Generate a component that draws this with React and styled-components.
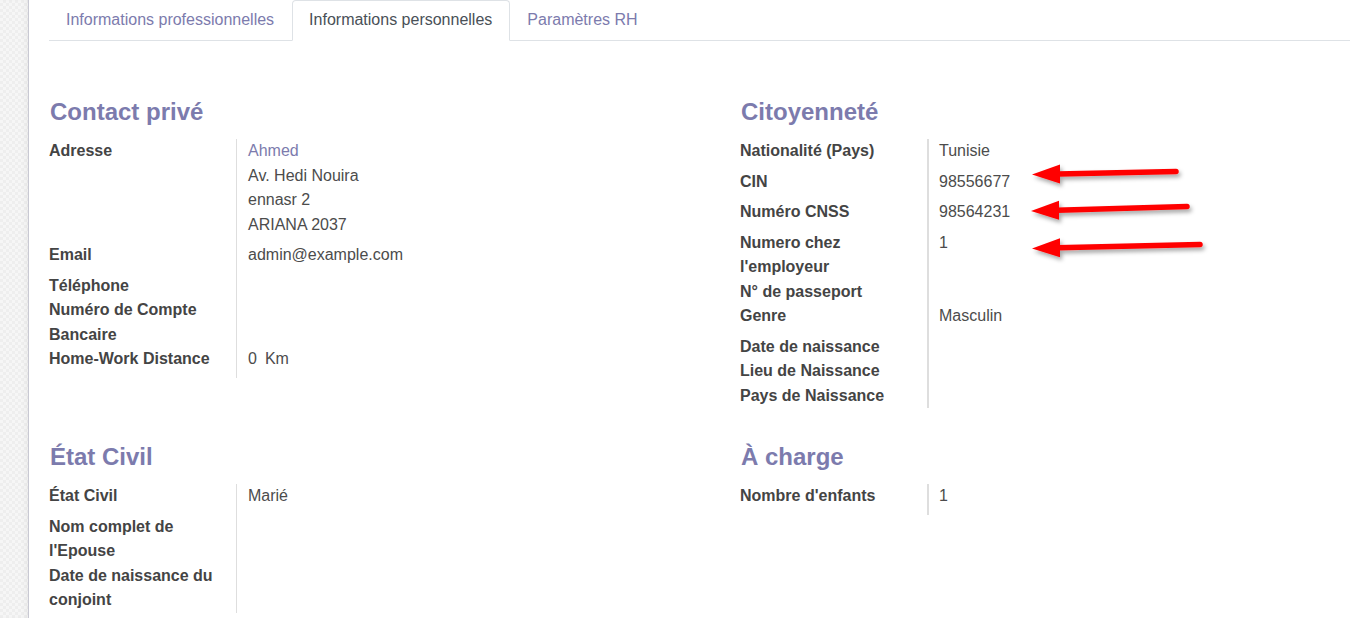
import React from "react";
import styled, { createGlobalStyle } from "styled-components";

const Global = createGlobalStyle`
  html, body { margin: 0; padding: 0; background: #fff; }
  body { font-family: "Liberation Sans", Arial, sans-serif; color: #4c4c4c; }
  * { box-sizing: border-box; }
`;

const Page = styled.div`
  display: flex;
  width: 1350px;
  height: 618px;
  overflow: hidden;
`;

const Strip = styled.div`
  flex: 0 0 28px;
  background-color: #f6f6f6;
  background-image: conic-gradient(#eeeeee 25%, transparent 0 50%, #eeeeee 0 75%, transparent 0);
  background-size: 6px 6px;
  box-shadow: inset -4px 0 6px -3px rgba(0, 0, 0, 0.06);
`;

const Sheet = styled.div`
  position: relative;
  flex: 1 1 auto;
  min-width: 0;
  background: #fff;
  border-left: 1px solid #c9c9d3;
  padding-left: 20px;
  overflow: hidden;
`;

const TabBar = styled.div`
  display: flex;
  border-bottom: 1px solid #dee2e6;
`;

const Tab = styled.div`
  margin-bottom: -1px;
  padding: 7px 17px 8px 16px;
  font-size: 16px;
  line-height: 24px;
  white-space: nowrap;
  border: 1px solid ${(p) => (p.$active ? "#dee2e6" : "transparent")};
  border-bottom-color: ${(p) => (p.$active ? "#fff" : "transparent")};
  border-radius: 4px 4px 0 0;
  color: ${(p) => (p.$active ? "#495057" : "#7c7bad")};
  background: ${(p) => (p.$active ? "#fff" : "transparent")};
`;

const Content = styled.div`
  padding-top: 56px;
`;

const Row = styled.div`
  display: grid;
  grid-template-columns: 691px 691px;
  margin-bottom: ${(p) => p.$gap || 0}px;
`;

const Column = styled.div`
  display: flex;
  flex-direction: column;
  align-items: flex-start;
`;

const Heading = styled.h2`
  margin: 0 0 13px 1px;
  font-size: 24px;
  line-height: 29px;
  font-weight: 700;
  color: #7c7bad;
  height: 29px;
`;

const Group = styled.div`
  display: grid;
  grid-template-columns: ${(p) => p.$labelWidth}px 460px;
`;

const Label = styled.div`
  font-size: 16px;
  line-height: 24.5px;
  font-weight: 700;
  color: #444;
  padding-right: 4px;
`;

const Value = styled.div`
  font-size: 16px;
  line-height: 24.5px;
  color: #4c4c4c;
  border-left: ${(p) => p.$line}px solid #dedede;
  padding-left: ${(p) => 12 - p.$line}px;
  padding-bottom: ${(p) => (p.$filled ? 6 : 0)}px;
`;

const Line = styled.div`
  color: ${(p) => (p.$link ? "#7c7bad" : "inherit")};
  white-space: nowrap;
`;

const Unit = styled.span`
  margin-left: 8px;
`;

const Arrows = styled.svg`
  position: absolute;
  left: 962px;
  top: 155px;
  overflow: visible;
`;

function Field({ label, value, line }) {
  const lines = value == null ? [] : Array.isArray(value) ? value : [value];
  return (
    <>
      <Label>{label}</Label>
      <Value $line={line} $filled={lines.length > 0}>
        {lines.map((l, i) => {
          const isLink = l && typeof l === "object" && !React.isValidElement(l);
          return (
            <Line key={i} $link={isLink && l.link}>
              {isLink ? l.text : l}
            </Line>
          );
        })}
      </Value>
    </>
  );
}

function GroupView({ title, fields, line, labelWidth }) {
  return (
    <Column>
      <Heading>{title}</Heading>
      <Group $labelWidth={labelWidth}>
        {fields.map((f, i) => (
          <Field key={i} label={f.label} value={f.value} line={line} />
        ))}
      </Group>
    </Column>
  );
}

const contact = [
  { label: "Adresse", value: [{ text: "Ahmed", link: true }, "Av. Hedi Nouira", "ennasr 2", "ARIANA 2037"] },
  { label: "Email", value: "admin@example.com" },
  { label: "Téléphone" },
  { label: <>Numéro de Compte<br />Bancaire</> },
  { label: "Home-Work Distance", value: <>0<Unit>Km</Unit></> },
];

const citizen = [
  { label: "Nationalité (Pays)", value: "Tunisie" },
  { label: "CIN", value: "98556677" },
  { label: "Numéro CNSS", value: "98564231" },
  { label: <>Numero chez<br />l'employeur</>, value: "1" },
  { label: "N° de passeport" },
  { label: "Genre", value: "Masculin" },
  { label: "Date de naissance" },
  { label: "Lieu de Naissance" },
  { label: "Pays de Naissance" },
];

const civil = [
  { label: "État Civil", value: "Marié" },
  { label: <>Nom complet de<br />l'Epouse</> },
  { label: <>Date de naissance du<br />conjoint</> },
];

const charge = [{ label: "Nombre d'enfants", value: "1" }];

function Arrow({ tipX, tipY, tailX, tailY }) {
  const baseX = tipX + 28;
  const t = (baseX - tipX) / (tailX - tipX);
  const baseY = tipY + (tailY - tipY) * t;
  return (
    <g>
      <line x1={baseX - 2} y1={baseY} x2={tailX} y2={tailY} stroke="#ff0000" strokeWidth="5.5" strokeLinecap="round" />
      <polygon points={`${tipX},${tipY} ${baseX},${baseY - 9.5} ${baseX},${baseY + 9.5}`} fill="#ff0000" />
    </g>
  );
}

export default function App() {
  return (
    <>
      <Global />
      <Page>
        <Strip />
        <Sheet>
          <TabBar>
            <Tab>Informations professionnelles</Tab>
            <Tab $active>Informations personnelles</Tab>
            <Tab>Paramètres RH</Tab>
          </TabBar>
          <Content>
            <Row $gap={34}>
              <GroupView title="Contact privé" fields={contact} line={1} labelWidth={187} />
              <GroupView title="Citoyenneté" fields={citizen} line={2} labelWidth={187} />
            </Row>
            <Row>
              <GroupView title="État Civil" fields={civil} line={1} labelWidth={187} />
              <GroupView title="À charge" fields={charge} line={2} labelWidth={187} />
            </Row>
          </Content>
          <Arrows width="240" height="120" viewBox="991 155 240 120">
            <defs>
              <filter id="sh" x="-20%" y="-60%" width="140%" height="220%">
                <feDropShadow dx="2" dy="3" stdDeviation="2.2" floodColor="#000" floodOpacity="0.35" />
              </filter>
            </defs>
            <g filter="url(#sh)">
              <Arrow tipX={1032} tipY={174.5} tailX={1176} tailY={171.5} />
              <Arrow tipX={1031} tipY={211} tailX={1187} tailY={206.5} />
              <Arrow tipX={1032} tipY={248.5} tailX={1200} tailY={244.5} />
            </g>
          </Arrows>
        </Sheet>
      </Page>
    </>
  );
}
